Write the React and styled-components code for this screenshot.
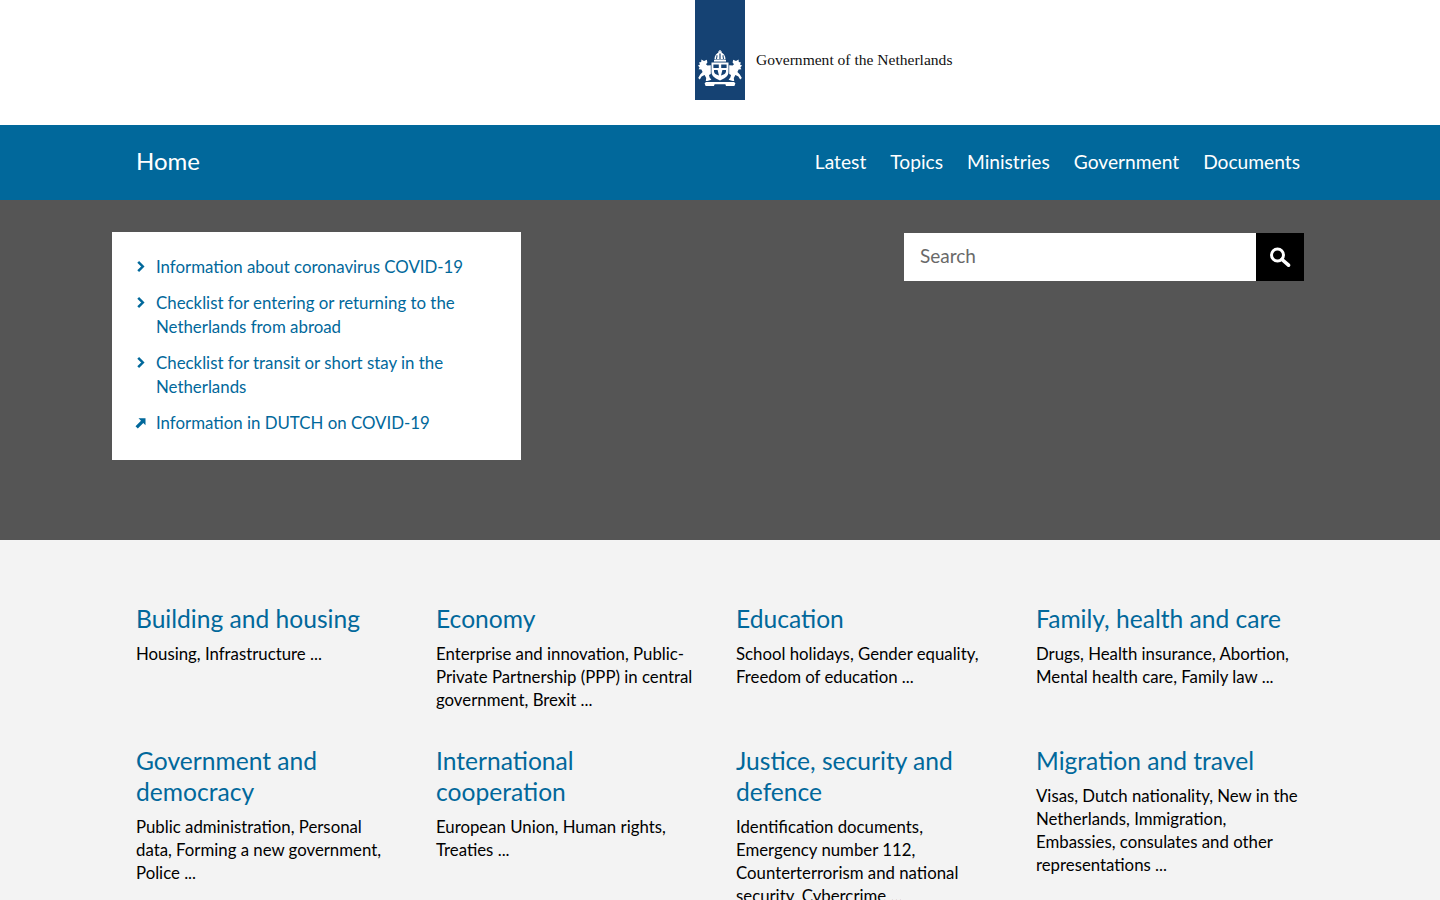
import styled, { createGlobalStyle } from "styled-components";

const topics = [
  { title: "Building and housing", text: "Housing, Infrastructure ..." },
  { title: "Economy", text: "Enterprise and innovation, Public-Private Partnership (PPP) in central government, Brexit ..." },
  { title: "Education", text: "School holidays, Gender equality, Freedom of education ..." },
  { title: "Family, health and care", text: "Drugs, Health insurance, Abortion, Mental health care, Family law ..." },
  { title: "Government and democracy", text: "Public administration, Personal data, Forming a new government, Police ..." },
  { title: "International cooperation", text: "European Union, Human rights, Treaties ..." },
  { title: "Justice, security and defence", text: "Identification documents, Emergency number 112, Counterterrorism and national security, Cybercrime ..." },
  { title: "Migration and travel", text: "Visas, Dutch nationality, New in the Netherlands, Immigration, Embassies, consulates and other representations ..." },
];

const links = [
  { label: "Information about coronavirus COVID-19" },
  { label: "Checklist for entering or returning to the Netherlands from abroad" },
  { label: "Checklist for transit or short stay in the Netherlands" },
  { label: "Information in DUTCH on COVID-19", external: true },
];

const navItems = ["Latest", "Topics", "Ministries", "Government", "Documents"];

const GlobalStyle = createGlobalStyle`
  html, body {
    margin: 0;
    padding: 0;
    height: 100%;
    overflow: hidden;
    background: #f3f3f3;
  }
  * { box-sizing: border-box; }
  body {
    font-family: "Lato", "Noto Sans", sans-serif;
    color: #000;
  }
`;

const Masthead = styled.header`
  height: 125px;
  background: #fff;
  display: flex;
  padding-left: 695px;
`;

const LogoBar = styled.div`
  width: 50px;
  height: 100px;
  background: #154273;
  display: flex;
  align-items: flex-end;
  justify-content: center;
  padding-bottom: 14px;
`;

const LogoText = styled.span`
  font-family: "Liberation Serif", serif;
  font-size: 15.55px;
  line-height: 20px;
  color: #111;
  margin: 50px 0 0 11px;
`;

const NavBar = styled.nav`
  height: 75px;
  background: #01689b;
  display: flex;
  align-items: center;
  justify-content: space-between;
  padding: 0 140px 2px 136px;
  color: #fff;
`;

const HomeLink = styled.a`
  font-size: 24px;
  margin-bottom: 2px;
`;

const NavList = styled.div`
  display: flex;
  gap: 24px;
  font-size: 19.2px;
`;

const Hero = styled.section`
  height: 340px;
  background: #555;
  display: flex;
  justify-content: space-between;
  align-items: flex-start;
  padding: 32px 136px 0 112px;
`;

const LinkPanel = styled.ul`
  width: 409px;
  height: 228px;
  background: #fff;
  list-style: none;
  margin: 0;
  padding: 23px 24px 0;
  display: flex;
  flex-direction: column;
  gap: 12px;
`;

const LinkRow = styled.li`
  display: flex;
  gap: 9px;
  font-size: 16.85px;
  line-height: 24px;
  color: #01689b;
`;

const LinkIcon = styled.svg`
  flex: none;
  width: 11px;
  height: 24px;
  overflow: visible;
`;

const SearchForm = styled.form`
  display: flex;
  margin-top: 1px;
`;

const SearchField = styled.div`
  width: 352px;
  height: 48px;
  background: #fff;
  color: #696969;
  font-size: 19px;
  line-height: 46px;
  padding-left: 16px;
`;

const SearchButton = styled.button`
  width: 48px;
  height: 48px;
  border: 0;
  padding: 0;
  background: #000;
  display: flex;
  align-items: center;
  justify-content: center;
`;

const Topics = styled.main`
  display: grid;
  grid-template-columns: repeat(4, 300px);
  row-gap: 22px;
  padding: 63px 0 0 136px;
`;

const Topic = styled.article`
  width: 264px;
  min-height: 120px;
`;

const TopicTitle = styled.h2`
  margin: 0 0 8px;
  font-size: 24.6px;
  font-weight: 400;
  line-height: 31px;
  color: #01689b;
`;

const TopicText = styled.p`
  margin: 0;
  font-size: 16.8px;
  line-height: 23px;
`;

const Chevron = () => (
  <LinkIcon viewBox="0 0 11 24">
    <path d="M2.2 6.8 L6.8 11.5 L2.2 16.2" fill="none" stroke="#01689b" strokeWidth="2.5" />
  </LinkIcon>
);

const ExternalArrow = () => (
  <LinkIcon viewBox="0 0 11 24">
    <path d="M2.5 7.2 H9.5 V14.2 L7.3 12 L1.8 17.5 L-0.5 15.2 L5 9.7 Z" fill="#01689b" />
  </LinkIcon>
);

// simplified national coat of arms, two lions holding the shield under a crown
const Crest = () => (
  <svg width="44" height="36" viewBox="0 0 44 36" fill="#fff">
    <path d="M21.4 0 H22.6 V1.4 H24 V2.6 H22.8 C25.6 3.4 27.4 5.4 27.6 9.4 H16.4 C16.6 5.4 18.4 3.4 21.2 2.6 H20 V1.4 H21.4 Z" />
    <rect x="16" y="10" width="12" height="1.6" />
    <path d="M21.4 3.6 H22.6 V9 H21.4 Z M18.6 5 L19.6 5.4 L19 9 H18 Z M25.4 5 L24.4 5.4 L25 9 H26 Z" fill="#154273" />
    <path d="M13.5 12.6 H30.5 V22 C30.5 26.5 26 28.6 22 30.5 C18 28.6 13.5 26.5 13.5 22 Z" />
    <path d="M15.4 14.4 H20.8 V18 H15.4 Z M23.2 14.4 H28.6 V18 H23.2 Z M16 20 H19.6 L21 25.4 L18.4 24.6 C17 23.6 16 22.6 16 21.4 Z M28 20 H24.4 L23 25.4 L25.6 24.6 C27 23.6 28 22.6 28 21.4 Z" fill="#154273" />
    <path d="M3.4 9.4 L6 11 L8.8 9.8 L9.4 12.6 L8 14.2 L9.4 15.4 L12.8 15.2 L12.8 24 L11 25 L11.6 27.4 L13.4 29.8 L9.4 31 L7.8 31 L8.2 28 L6.6 25 L3.6 26.4 L1.8 29.4 L0.2 28 L2.2 24.4 L4.6 22 L3.4 19.4 L0.6 19.2 L1.6 17.4 L0 15.6 L2 14.6 L1 12.4 L3.2 12 Z" />
    <path d="M40.6 9.4 L38 11 L35.2 9.8 L34.6 12.6 L36 14.2 L34.6 15.4 L31.2 15.2 L31.2 24 L33 25 L32.4 27.4 L30.6 29.8 L34.6 31 L36.2 31 L35.8 28 L37.4 25 L40.4 26.4 L42.2 29.4 L43.8 28 L41.8 24.4 L39.4 22 L40.6 19.4 L43.4 19.2 L42.4 17.4 L44 15.6 L42 14.6 L43 12.4 L40.8 12 Z" />
    <path d="M8 32 H36 L37.4 33.2 L36.4 36 H28 L27.4 34.2 H16.6 L16 36 H7.6 L6.6 33.2 Z" />
  </svg>
);

const App = () => {
  return (
    <>
      <GlobalStyle />
      <Masthead>
        <LogoBar>
          <Crest />
        </LogoBar>
        <LogoText>Government of the Netherlands</LogoText>
      </Masthead>
      <NavBar>
        <HomeLink>Home</HomeLink>
        <NavList>
          {navItems.map((item) => (
            <a key={item}>{item}</a>
          ))}
        </NavList>
      </NavBar>
      <Hero>
        <LinkPanel>
          {links.map((link) => (
            <LinkRow key={link.label}>
              {link.external ? <ExternalArrow /> : <Chevron />}
              <span>{link.label}</span>
            </LinkRow>
          ))}
        </LinkPanel>
        <SearchForm>
          <SearchField>Search</SearchField>
          <SearchButton type="button" aria-label="Search">
            <svg width="22" height="22" viewBox="0 0 22 22" fill="none" stroke="#fff">
              <circle cx="8.5" cy="9" r="6" strokeWidth="3" />
              <path d="M13 13.5 L19.5 19.2" strokeWidth="3.6" strokeLinecap="round" />
            </svg>
          </SearchButton>
        </SearchForm>
      </Hero>
      <Topics>
        {topics.map((topic) => (
          <Topic key={topic.title}>
            <TopicTitle>{topic.title}</TopicTitle>
            <TopicText>{topic.text}</TopicText>
          </Topic>
        ))}
      </Topics>
    </>
  );
};

export default App;
